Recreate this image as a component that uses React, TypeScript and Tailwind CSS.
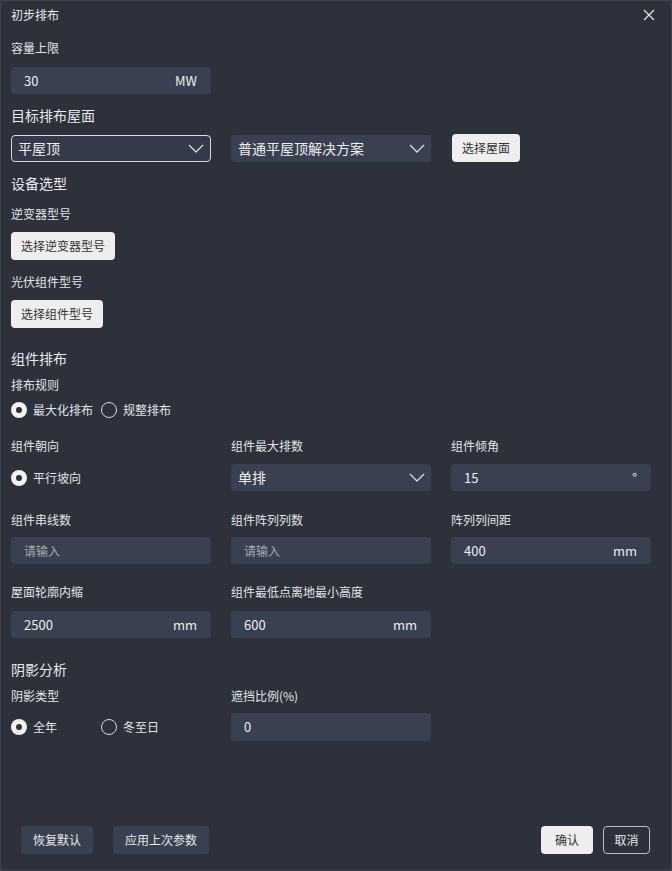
import type { ReactNode } from 'react';

const FONT = { fontFamily: '"Noto Sans CJK SC", "Noto Sans", sans-serif' };

function Chevron() {
  return (
    <svg width="16" height="9" viewBox="0 0 16 9" fill="none" className="shrink-0">
      <polyline points="1,1 8,8 15,1" stroke="#d8dbe0" strokeWidth="1.3" />
    </svg>
  );
}

function Label({ children, className = '' }: { children: ReactNode; className?: string }) {
  return <div className={`text-[12px] leading-[18px] text-[#e2e4e8] ${className}`}>{children}</div>;
}

function Heading({ children, className = '' }: { children: ReactNode; className?: string }) {
  return <div className={`text-[14px] leading-[20px] text-[#e8eaee] ${className}`}>{children}</div>;
}

function Field({ value, unit, placeholder }: { value?: string; unit?: string; placeholder?: string }) {
  return (
    <div className="flex h-[27px] w-[200px] items-center justify-between rounded-[4px] bg-[#394150] pl-[13px] pr-[14px] text-[13px]">
      {value ? (
        <span className="text-[#eceef2]">{value}</span>
      ) : (
        <span className="text-[12px] text-[#a3a9b2]">{placeholder}</span>
      )}
      {unit && <span className="text-[#eceef2]">{unit}</span>}
    </div>
  );
}

function Select({ value, bordered }: { value: string; bordered?: boolean }) {
  return (
    <div
      className={`flex h-[27px] w-[200px] items-center justify-between rounded-[4px] pr-[6px] text-[14px] text-[#eceef2] ${
        bordered ? 'border border-[#d5d8dd] bg-[#343a47] pl-[6px]' : 'bg-[#394150] pl-[7px]'
      }`}
    >
      <span>{value}</span>
      <Chevron />
    </div>
  );
}

function LightButton({ children }: { children: ReactNode }) {
  return (
    <button className="h-[28px] rounded-[4px] bg-[#eeeeee] px-[10px] text-[12px] text-[#333]">{children}</button>
  );
}

function Radio({ checked, label }: { checked?: boolean; label: string }) {
  return (
    <div className="flex items-center gap-[6px] text-[12px] text-[#e2e4e8]">
      {checked ? (
        <span className="flex h-[16px] w-[16px] items-center justify-center rounded-full bg-[#f2f2f2]">
          <span className="h-[6px] w-[6px] rounded-full bg-[#2c313c]" />
        </span>
      ) : (
        <span className="h-[16px] w-[16px] rounded-full border-[1.5px] border-[#d5d8dd]" />
      )}
      <span>{label}</span>
    </div>
  );
}

export default function App() {
  return (
    <div
      style={FONT}
      className="flex h-[871px] w-[672px] flex-col border border-[#3d4350] bg-[#2c313c] px-[10px]"
    >
      <div className="flex items-center justify-between pt-[5px]">
        <div className="text-[12px] leading-[18px] text-[#e8eaee]">初步排布</div>
        <svg width="12" height="12" viewBox="0 0 12 12" className="mr-[6px]">
          <path d="M1 1L11 11M11 1L1 11" stroke="#e0e2e6" strokeWidth="1.3" />
        </svg>
      </div>

      <Label className="mt-[15px]">容量上限</Label>
      <div className="mt-[10px]">
        <Field value="30" unit="MW" />
      </div>

      <Heading className="mt-[11px]">目标排布屋面</Heading>
      <div className="mt-[9px] flex items-center gap-[20px]">
        <Select value="平屋顶" bordered />
        <Select value="普通平屋顶解决方案" />
        <div className="ml-[1px]">
          <LightButton>选择屋面</LightButton>
        </div>
      </div>

      <Heading className="mt-[11px]">设备选型</Heading>
      <Label className="mt-[12px]">逆变器型号</Label>
      <div className="mt-[9px]">
        <LightButton>选择逆变器型号</LightButton>
      </div>
      <Label className="mt-[13px]">光伏组件型号</Label>
      <div className="mt-[9px]">
        <LightButton>选择组件型号</LightButton>
      </div>

      <Heading className="mt-[20px]">组件排布</Heading>
      <Label className="mt-[8px]">排布规则</Label>
      <div className="mt-[7px] flex h-[18px] items-center gap-[8px]">
        <Radio checked label="最大化排布" />
        <Radio label="规整排布" />
      </div>

      <div className="mt-[18px] grid grid-cols-[200px_200px_200px] gap-x-[20px]">
        <Label>组件朝向</Label>
        <Label>组件最大排数</Label>
        <Label>组件倾角</Label>
        <div className="mt-[9px] flex h-[27px] items-center">
          <Radio checked label="平行坡向" />
        </div>
        <div className="mt-[9px]">
          <Select value="单排" />
        </div>
        <div className="mt-[9px]">
          <Field value="15" unit="°" />
        </div>

        <Label className="mt-[20px]">组件串线数</Label>
        <Label className="mt-[20px]">组件阵列列数</Label>
        <Label className="mt-[20px]">阵列列间距</Label>
        <div className="mt-[8px]">
          <Field placeholder="请输入" />
        </div>
        <div className="mt-[8px]">
          <Field placeholder="请输入" />
        </div>
        <div className="mt-[8px]">
          <Field value="400" unit="mm" />
        </div>

        <Label className="mt-[19px]">屋面轮廓内缩</Label>
        <Label className="mt-[19px]">组件最低点离地最小高度</Label>
        <div />
        <div className="mt-[10px]">
          <Field value="2500" unit="mm" />
        </div>
        <div className="mt-[10px]">
          <Field value="600" unit="mm" />
        </div>
        <div />
      </div>

      <Heading className="mt-[21px]">阴影分析</Heading>
      <div className="mt-[8px] grid grid-cols-[200px_200px] gap-x-[20px]">
        <Label>阴影类型</Label>
        <Label>遮挡比例(%)</Label>
        <div className="mt-[8px] flex h-[28px] items-center gap-[44px]">
          <Radio checked label="全年" />
          <Radio label="冬至日" />
        </div>
        <div className="mt-[8px]">
          <div className="flex h-[28px] w-[200px] items-center rounded-[4px] bg-[#394150] pl-[13px] text-[13px] text-[#eceef2]">
            0
          </div>
        </div>
      </div>

      <div className="mt-auto mb-[16px] flex items-center px-[10px]">
        <button className="h-[28px] rounded-[4px] bg-[#394150] px-[12px] text-[12px] text-[#e6e8ec]">恢复默认</button>
        <button className="ml-[20px] h-[28px] rounded-[4px] bg-[#394150] px-[12px] text-[12px] text-[#e6e8ec]">
          应用上次参数
        </button>
        <button className="ml-auto h-[28px] rounded-[4px] bg-[#eeeeee] px-[14px] text-[12px] text-[#333]">确认</button>
        <button className="ml-[10px] mr-[1px] h-[28px] rounded-[4px] border border-[#b8bcc4] px-[10.5px] text-[12px] text-[#e6e8ec]">
          取消
        </button>
      </div>
    </div>
  );
}
